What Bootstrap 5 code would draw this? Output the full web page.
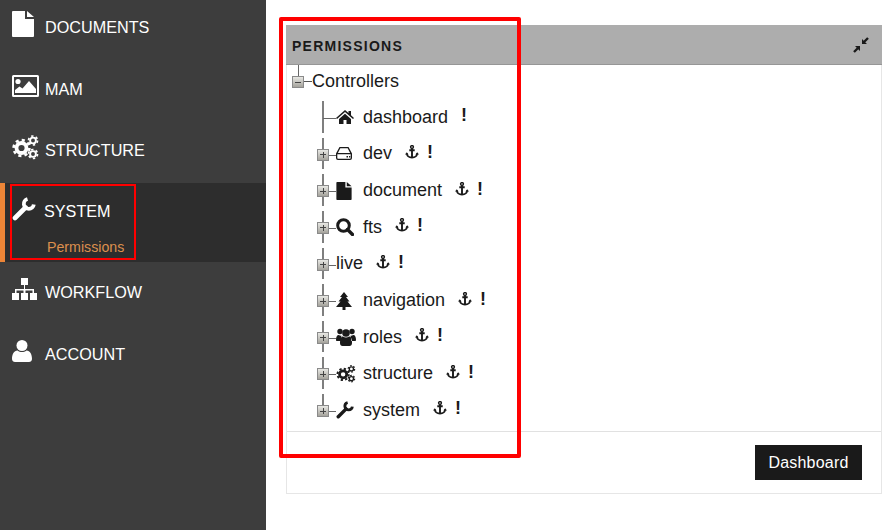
<!DOCTYPE html>
<html lang="en">
<head>
  <meta charset="UTF-8">
  <title>Permissions</title>
  <link href="https://cdn.jsdelivr.net/npm/bootstrap@5.3.0/dist/css/bootstrap.min.css" rel="stylesheet">
  <style>
    body {
      font-family: "Liberation Sans", Arial, sans-serif;
      color: #1a1a1a;
      height: 530px;
      overflow: hidden;
      position: relative;
    }
    .side-nav {
      width: 266px;
      height: 530px;
      background: #3d3d3d;
      color: #fff;
      font-size: 16.2px;
      flex-shrink: 0;
    }
    .side-item {
      height: 61.5px;
      padding: 11px 0 0 12px;
    }
    .side-row {
      height: 27px;
      position: relative;
    }
    .side-row span {
      line-height: 20px;
      margin: 0 0 1px 33px;
    }
    .side-row svg {
      position: absolute;
      top: 0;
      fill: currentColor;
    }
    .side-active {
      height: 79px;
      margin-top: -1.5px;
      background: #2d2d2d;
      border-left: 5px solid #ed8537;
      padding-left: 7px;
    }
    .side-active .side-row { height: 28px; }
    .side-active .side-row span { margin-left: 32px; }
    .side-active + .side-item { margin-top: 3px; }
    .side-sub {
      color: #dc8f4d;
      font-size: 14.2px;
      line-height: 20px;
      margin: 15px 0 0 35px;
    }
    .ic-mam { margin-top: 2.5px; }
    .ic-cogs { margin-top: 1px; }
    .ic-wrench { margin-top: 3px; }
    .ic-sitemap { margin-top: 2px; }
    .ic-user { margin-top: 2.5px; }
    .page-main {
      padding: 25px 9px 0 20px;
      flex-grow: 1;
    }
    .perm-panel {
      height: 469px;
      border: 1px solid #e6e6e6;
      border-radius: 0;
    }
    .perm-head {
      height: 40px;
      margin: -1px -1px 0;
      padding: 0 13px 0 6px;
      background: #adadad;
      border: 0;
      border-bottom: 1px solid #969696;
      border-radius: 0 !important;
      font-size: 14px;
      font-weight: 700;
      letter-spacing: 1.25px;
    }
    .perm-title { margin-top: 4px; }
    .perm-foot {
      height: 62px;
      padding: 13px 19px 0 0;
      background: #fff;
      border-top: 1px solid #e1e1e1;
      border-radius: 0 !important;
    }
    .perm-btn {
      width: 107px;
      height: 35px;
      padding: 0;
      font-size: 16px;
      letter-spacing: .2px;
      color: #fff;
      background: #1a1a1a;
      border: 0;
      border-radius: 0;
    }
    .tree-root {
      height: 34px;
      padding: 0 0 2px 25px;
      font-size: 18px;
      position: relative;
    }
    .tree-root::before {
      content: "";
      position: absolute;
      left: 11px;
      top: 0;
      height: 14px;
      width: 1px;
      background: #666;
    }
    .tree-root::after {
      content: "";
      position: absolute;
      left: 17px;
      top: 16px;
      width: 8px;
      height: 1px;
      background: #555;
    }
    .tree-row {
      height: 36.65px;
      padding-left: 49px;
      font-size: 18px;
      position: relative;
    }
    .tree-row::before {
      content: "";
      position: absolute;
      left: 35px;
      top: 2px;
      bottom: 3px;
      width: 2px;
      background: #7f7f7f;
    }
    .tree-row::after {
      content: "";
      position: absolute;
      left: 36px;
      top: 19px;
      width: 13px;
      height: 1px;
      background: #666;
    }
    .tree-row:last-child::before { bottom: 16px; }
    .tree-box {
      position: absolute;
      z-index: 1;
      left: 30px;
      top: 13px;
      width: 12px;
      height: 12px;
      border: 1px solid #8a8a8a;
      background:
        linear-gradient(#444, #444) center / 6px 1px no-repeat,
        linear-gradient(#444, #444) center / 1px 6px no-repeat,
        linear-gradient(#e8e8e4, #a5a39c);
    }
    .tree-root .tree-box {
      left: 5px;
      top: 11px;
      background:
        linear-gradient(#444, #444) center / 6px 1px no-repeat,
        linear-gradient(#e8e8e4, #a5a39c);
    }
    .tree-icon {
      width: 27px;
      flex-shrink: 0;
    }
    .tree-icon svg {
      display: block;
      fill: #1a1a1a;
      color: #1a1a1a;
    }
    .tree-anchor {
      width: 14px;
      height: 14px;
      margin: 0 8.5px 4px 12.5px;
      flex-shrink: 0;
    }
    .tree-bang {
      font-weight: 700;
      margin-bottom: 4px;
      line-height: 20px;
    }
    .tree-bang-only { margin-left: 13px; }
    .note-box {
      position: absolute;
      border: 4px solid #f00;
      border-radius: 2px;
      pointer-events: none;
    }
    .note-tree { left: 279px; top: 17px; width: 242px; height: 441px; }
    .note-side { left: 10px; top: 184px; width: 126px; height: 76px; border-width: 2px; border-radius: 0; }
  </style>
</head>
<body>
  <svg width="0" height="0" class="d-block position-absolute">
    <defs>
      <symbol id="i-file" viewBox="0 0 22 26"><path d="M0 1a1 1 0 0 1 1-1h12v8h9v17a1 1 0 0 1-1 1H1a1 1 0 0 1-1-1zM15 0l7 6h-7z"/></symbol>
      <symbol id="i-image" viewBox="0 0 27 22"><path fill-rule="evenodd" d="M1.500 0h24A1.500 1.500 0 0 1 27 1.500v19a1.500 1.500 0 0 1-1.500 1.500h-24A1.500 1.500 0 0 1 0 20.500v-19A1.500 1.500 0 0 1 1.500 0zM2 2v18h23V2z"/><circle cx="6" cy="6.500" r="2.600"/><path d="M3 18v-3l4.500-3.500 3 2L17 6l7 8v4z"/></symbol>
      <symbol id="i-cogs" viewBox="0 0 27 25">
        <g fill="none" stroke="currentColor">
          <circle cx="9.500" cy="13" r="5" stroke-width="3.800"/>
          <circle cx="9.500" cy="13" r="7.900" stroke-width="2.600" stroke-dasharray="3.100 3.100"/>
          <circle cx="21" cy="5.500" r="2.900" stroke-width="1.900"/>
          <circle cx="21" cy="5.500" r="4.500" stroke-width="1.700" stroke-dasharray="2.350 2.350"/>
          <circle cx="21" cy="19" r="2.900" stroke-width="1.900"/>
          <circle cx="21" cy="19" r="4.500" stroke-width="1.700" stroke-dasharray="2.350 2.350"/>
        </g>
      </symbol>
      <symbol id="i-wrench" viewBox="0 0 24 24">
        <g fill="none" stroke="currentColor" stroke-linecap="round">
          <path d="M3 21 13.500 10.500" stroke-width="4.600"/>
          <path d="M21.800 7.500A5 5 0 1 1 15.500 2" stroke-width="3.800" stroke-linecap="butt"/>
        </g>
      </symbol>
      <symbol id="i-sitemap" viewBox="0 0 25 22"><path d="M9 0h7v7H9zM0 15h7v7H0zM9 15h7v7H9zM18 15h7v7h-7z"/><path d="M12 7h1v4h9v4h-1.500v-2.500h-7V15h-2v-2.500h-7V15H3v-4h9z"/></symbol>
      <symbol id="i-user" viewBox="0 0 20 22"><ellipse cx="10" cy="5.500" rx="5.500" ry="5.500"/><path d="M0 19c0-5 2-8 5.500-8.500 2.700 2 6.300 2 9 0C18 11 20 14 20 19c0 2-1.500 3-3 3H3c-1.500 0-3-1-3-3z"/></symbol>
      <symbol id="i-home" viewBox="0 0 18 14"><path d="M9 0l3.500 3V1H15v4.200L18 8l-1 1-8-7-8 7-1-1z"/><path d="M3 9l6-5.200L15 9v5h-4.500v-4h-3v4H3z"/></symbol>
      <symbol id="i-hdd" viewBox="0 0 16 13"><path fill-rule="evenodd" d="M3.500 0h9l3.500 6.500V11a2 2 0 0 1-2 2H2a2 2 0 0 1-2-2V6.500zM4.300 1.300 1.900 6h12.200l-2.400-4.700zM1.300 7.300V11c0 .4.300.7.700.7h12c.4 0 .7-.3.700-.7V7.300z"/><path d="M10.500 9h1.500v1.500h-1.500zM13 9h1.300v1.500H13z"/></symbol>
      <symbol id="i-search" viewBox="0 0 18 18"><g fill="none" stroke="currentColor"><circle cx="7.500" cy="7.500" r="5.800" stroke-width="3"/><path d="M11.500 11.500 16.500 16.500" stroke-width="3.400" stroke-linecap="round"/></g></symbol>
      <symbol id="i-tree" viewBox="0 0 16 18"><path d="M8 0l4 5h-2l3.500 4.500h-2L16 15H9.500v3h-3v-3H0l4.500-5.500h-2L6 5H4z"/></symbol>
      <symbol id="i-users" viewBox="0 0 20 18"><circle cx="4" cy="3.500" r="2.700"/><circle cx="16" cy="3.500" r="2.700"/><circle cx="10" cy="5" r="3.800"/><path d="M0 12c0-3 .8-5 2.800-5 1 .8 2 .9 2.800.7-.3 1-.8 1.600-.8 5.300H1c-.6 0-1-.4-1-1zM20 12c0-3-.8-5-2.800-5-1 .8-2 .9-2.800.7.300 1 .8 1.600.8 5.300H19c.6 0 1-.4 1-1zM4 15c0-4 1-6.500 3-6.500 1.800 1.300 4.200 1.300 6 0 2 0 3 2.500 3 6.500 0 2-1 3-2.500 3h-7C5 18 4 17 4 15z"/></symbol>
      <symbol id="i-anchor" viewBox="0 0 14 14">
        <g fill="none" stroke="#1a1a1a">
          <circle cx="7" cy="2" r="1.400" stroke-width="1.500"/>
          <path d="M7 3.500V13M4.300 5.200h5.400" stroke-width="1.900"/>
          <path d="M1.800 8.500C2.200 11.500 4.500 12.500 7 12.500s4.800-1 5.200-4" stroke-width="1.800"/>
        </g>
        <path d="M0 9.500l1.800-2.300 1.800 2.300zM10.400 9.500l1.800-2.300L14 9.500z" fill="#1a1a1a"/>
      </symbol>
      <symbol id="i-compress" viewBox="0 0 16 16">
        <path d="M9 2l5 5H9zM7 14 2 9h5z" fill="#1a1a1a"/>
        <path d="M11 5l4-4M5 11l-4 4" stroke="#1a1a1a" stroke-width="2.400" fill="none"/>
      </symbol>
    </defs>
  </svg>

  <div class="d-flex">
    <nav class="side-nav">
      <div class="side-item"><div class="side-row d-flex align-items-end"><svg width="22" height="26"><use href="#i-file"/></svg><span>DOCUMENTS</span></div></div>
      <div class="side-item"><div class="side-row d-flex align-items-end"><svg width="27" height="22" class="ic-mam"><use href="#i-image"/></svg><span>MAM</span></div></div>
      <div class="side-item"><div class="side-row d-flex align-items-end"><svg width="27" height="25" class="ic-cogs"><use href="#i-cogs"/></svg><span>STRUCTURE</span></div></div>
      <div class="side-item side-active">
        <div class="side-row d-flex align-items-end"><svg width="24" height="24" class="ic-wrench"><use href="#i-wrench"/></svg><span>SYSTEM</span></div>
        <div class="side-sub">Permissions</div>
      </div>
      <div class="side-item"><div class="side-row d-flex align-items-end"><svg width="25" height="22" class="ic-sitemap"><use href="#i-sitemap"/></svg><span>WORKFLOW</span></div></div>
      <div class="side-item"><div class="side-row d-flex align-items-end"><svg width="20" height="22" class="ic-user"><use href="#i-user"/></svg><span>ACCOUNT</span></div></div>
    </nav>

    <main class="page-main">
      <div class="card perm-panel">
        <div class="card-header perm-head d-flex align-items-center justify-content-between">
          <span class="perm-title">PERMISSIONS</span>
          <svg width="16" height="16"><use href="#i-compress"/></svg>
        </div>
        <div class="card-body p-0">
          <div class="tree-root d-flex align-items-center"><i class="tree-box"></i>Controllers</div>
          <ul class="list-unstyled m-0">
            <li class="tree-row d-flex align-items-center">
              <span class="tree-icon"><svg width="18" height="14"><use href="#i-home"/></svg></span>dashboard<span class="tree-bang tree-bang-only">!</span>
            </li>
            <li class="tree-row d-flex align-items-center"><i class="tree-box"></i>
              <span class="tree-icon"><svg width="16" height="13"><use href="#i-hdd"/></svg></span>dev<svg class="tree-anchor"><use href="#i-anchor"/></svg><span class="tree-bang">!</span>
            </li>
            <li class="tree-row d-flex align-items-center"><i class="tree-box"></i>
              <span class="tree-icon"><svg width="16" height="18"><use href="#i-file"/></svg></span>document<svg class="tree-anchor"><use href="#i-anchor"/></svg><span class="tree-bang">!</span>
            </li>
            <li class="tree-row d-flex align-items-center"><i class="tree-box"></i>
              <span class="tree-icon"><svg width="18" height="18"><use href="#i-search"/></svg></span>fts<svg class="tree-anchor"><use href="#i-anchor"/></svg><span class="tree-bang">!</span>
            </li>
            <li class="tree-row d-flex align-items-center"><i class="tree-box"></i>live<svg class="tree-anchor"><use href="#i-anchor"/></svg><span class="tree-bang">!</span></li>
            <li class="tree-row d-flex align-items-center"><i class="tree-box"></i>
              <span class="tree-icon"><svg width="16" height="18"><use href="#i-tree"/></svg></span>navigation<svg class="tree-anchor"><use href="#i-anchor"/></svg><span class="tree-bang">!</span>
            </li>
            <li class="tree-row d-flex align-items-center"><i class="tree-box"></i>
              <span class="tree-icon"><svg width="20" height="18"><use href="#i-users"/></svg></span>roles<svg class="tree-anchor"><use href="#i-anchor"/></svg><span class="tree-bang">!</span>
            </li>
            <li class="tree-row d-flex align-items-center"><i class="tree-box"></i>
              <span class="tree-icon"><svg width="20" height="18"><use href="#i-cogs"/></svg></span>structure<svg class="tree-anchor"><use href="#i-anchor"/></svg><span class="tree-bang">!</span>
            </li>
            <li class="tree-row d-flex align-items-center"><i class="tree-box"></i>
              <span class="tree-icon"><svg width="18" height="18"><use href="#i-wrench"/></svg></span>system<svg class="tree-anchor"><use href="#i-anchor"/></svg><span class="tree-bang">!</span>
            </li>
          </ul>
        </div>
        <div class="card-footer perm-foot d-flex justify-content-end align-items-start">
          <button type="button" class="btn perm-btn">Dashboard</button>
        </div>
      </div>
    </main>
  </div>

  <div class="note-box note-tree"></div>
  <div class="note-box note-side"></div>

  <script src="https://cdn.jsdelivr.net/npm/bootstrap@5.3.0/dist/js/bootstrap.bundle.min.js"></script>
</body>
</html>
